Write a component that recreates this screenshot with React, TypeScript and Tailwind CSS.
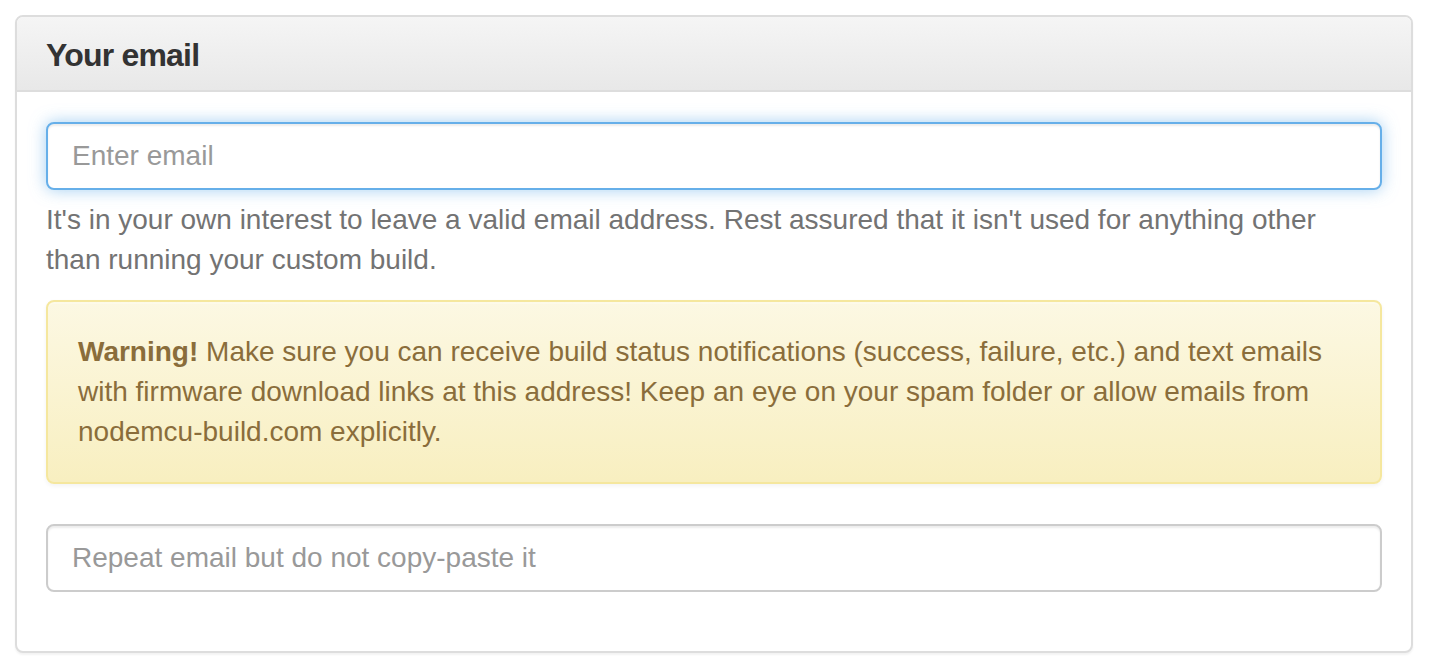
import React from "react";

export default function App() {
  return (
    <div className="min-h-[670px] w-[1430px] bg-white pt-[15px] pl-[15px] font-['Liberation_Sans',Arial,sans-serif]">
      <div className="w-[1398px] rounded-[8px] border-2 border-[#dddddd] bg-white shadow-[0_2px_2px_rgba(0,0,0,0.05)]">
        <div className="rounded-t-[6px] border-b-2 border-[#dddddd] bg-gradient-to-b from-[#f5f5f5] to-[#e8e8e8] pl-[29px] pr-[30px] pt-[22px] pb-[19px]">
          <h3 className="text-[32px] leading-[32px] font-bold tracking-[-0.8px] text-[#333333]">Your email</h3>
        </div>
        <div className="px-[29px] pt-[30px] pb-[30px]">
          <input
            type="email"
            placeholder="Enter email"
            className="block h-[68px] w-full rounded-[8px] border-2 border-[#66afe9] bg-white px-[24px] text-[28px] text-[#555] outline-none placeholder:text-[#999999] shadow-[inset_0_2px_2px_rgba(0,0,0,0.075),0_0_16px_rgba(102,175,233,0.6)]"
          />
          <p className="mt-[10px] mb-[20px] text-[28px] leading-[40px] text-[#737373]">
            It's in your own interest to leave a valid email address. Rest assured that it isn't used for anything other
            <br />
            than running your custom build.
          </p>
          <div className="mb-[40px] rounded-[8px] border-2 border-[#f5e79e] bg-gradient-to-b from-[#fcf8e3] to-[#f8efc0] px-[30px] pt-[30px] pb-[30px] text-[28px] leading-[40px] text-[#8a6d3b] shadow-[inset_0_2px_0_rgba(255,255,255,0.25),0_2px_4px_rgba(0,0,0,0.05)]">
            <strong className="font-bold">Warning!</strong> Make sure you can receive build status notifications (success, failure, etc.) and text emails
            <br />
            with firmware download links at this address! Keep an eye on your spam folder or allow emails from
            <br />
            nodemcu-build.com explicitly.
          </div>
          <div className="mb-[29px]">
            <input
              type="email"
              placeholder="Repeat email but do not copy-paste it"
              className="block h-[68px] w-full rounded-[8px] border-2 border-[#cccccc] bg-white px-[24px] text-[28px] text-[#555] outline-none placeholder:text-[#999999] shadow-[inset_0_2px_2px_rgba(0,0,0,0.075)]"
            />
          </div>
        </div>
      </div>
    </div>
  );
}
